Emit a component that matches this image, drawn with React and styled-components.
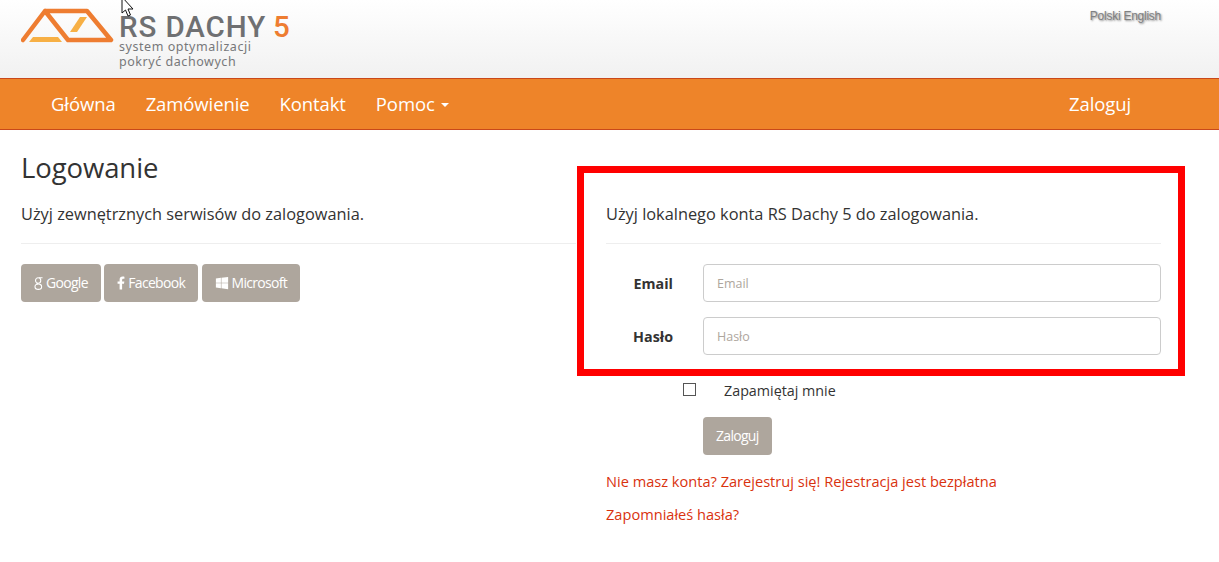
import React from "react";
import styled, { createGlobalStyle } from "styled-components";
import { FaFacebookF, FaWindows } from "react-icons/fa";

const Global = createGlobalStyle`
  html, body { margin: 0; padding: 0; background: #fff; }
  body { font-family: "Open Sans", "Noto Sans", sans-serif; color: #333; }
  * { box-sizing: border-box; }
`;
const Page = styled.div`position: relative; width: 1219px; height: 562px; overflow: hidden;`;
const Header = styled.header`
  height: 78px; display: flex; justify-content: space-between; padding: 0 58px 0 21px;
  background: linear-gradient(#ffffff, #f1f1f1);
`;
const Brand = styled.div`display: flex; align-items: flex-start; gap: 5px; padding-top: 8px;`;
const BrandText = styled.div`display: flex; flex-direction: column; padding-top: 7px;`;
const BrandName = styled.div`
  font-family: "Roboto", sans-serif; font-weight: 500; font-size: 29.5px; line-height: 24px; letter-spacing: .9px; color: #6f7072;
  span { color: #ee7d31; margin-left: 7px; font-weight: 500; }
`;
const BrandSub = styled.div`
  font-family: "Noto Sans", sans-serif; font-size: 12.5px; line-height: 14.5px; letter-spacing: .55px; color: #77787a; margin-top: 1px;
`;
const Lang = styled.div`
  font-family: "Liberation Sans", sans-serif; font-size: 12px; letter-spacing: -.25px; color: #808080; padding-top: 9px; text-shadow: 1px 1px 2px #808080;
`;
const Nav = styled.nav`
  height: 52px; display: flex; justify-content: space-between; align-items: center; padding: 0 73px 0 36px;
  background: #ee8429; border-top: 1px solid #c9481a; border-bottom: 1px solid #c9481a;
`;
const NavList = styled.div`display: flex;`;
const NavItem = styled.a`
  padding: 0 15px; color: #fff; font-size: 18.5px; line-height: 50px; letter-spacing: -.1px; display: flex; align-items: center;
`;
const Caret = styled.i`
  display: inline-block; margin-left: 6px; margin-top: 2px; border-top: 4px solid #fff; border-left: 4px solid transparent; border-right: 4px solid transparent;
`;
const Row = styled.main`display: grid; grid-template-columns: 585px 585px; padding-left: 6px;`;
const Col = styled.section`padding: 0 15px;`;
const Title = styled.h2`
  margin: 19px 0 0; height: 37px; font-weight: 400; font-size: 27.5px; line-height: 37px; color: #333; letter-spacing: -.1px;
`;
const Lead = styled.h4`
  margin: 17px 0 0; font-weight: 400; font-size: 16.35px; line-height: 22px; color: #333;
`;
const Rule = styled.hr`margin: 18px 0 20px; border: 0; border-top: 1px solid #eee;`;
const Socials = styled.div`display: flex; gap: 3.5px;`;
const Btn = styled.button`
  height: 38px; padding: 0 13px; border: 0; border-radius: 4px; background: #aea69d; color: #fff;
  font: 400 14px/38px "Open Sans", sans-serif; letter-spacing: -.7px; display: inline-flex; align-items: center; gap: 3px;
`;
const FacebookIcon = styled(FaFacebookF)`width: 8px; height: 14px;`;
const FormGrid = styled.div`
  display: grid; grid-template-columns: 67px 458px; column-gap: 30px; row-gap: 15px; align-items: center;
`;
const Label = styled.label`font-weight: 700; font-size: 14.3px; text-align: right; color: #333;`;
const Input = styled.input`
  width: 100%; height: 38px; padding: 0 13px; border: 1px solid #ccc; border-radius: 4px; font: 400 12.5px "Open Sans", sans-serif; background: #fff;
  &::placeholder { color: #aea69d; opacity: 1; }
`;
const Remember = styled.div`
  display: flex; align-items: center; margin: 24px 0 0 77px; height: 22px; font-size: 14.3px; color: #333;
`;
const Box = styled.span`width: 13px; height: 13px; border: 1px solid #555; background: #fff; margin-right: 28px; margin-top: -2px;`;
const SubmitWrap = styled.div`margin: 16px 0 0 97px;`;
const Links = styled.div`margin-top: 16px; display: flex; flex-direction: column; gap: 13px;`;
const Linkish = styled.a`color: #d9320e; font-size: 14.6px; line-height: 20px;`;
const RedFrame = styled.div`
  position: absolute; left: 577px; top: 166px; width: 608px; height: 210px; border: 7px solid #ff0000; pointer-events: none;
`;
const Cursor = styled.svg`position: absolute; left: 121px; top: 0;`;

const GoogleGlyph = () => (
  <svg width="9" height="15" viewBox="0 0 10 15" fill="none" stroke="#fff" strokeWidth="1.2" aria-hidden="true">
    <ellipse cx="4.6" cy="4.2" rx="2.9" ry="3.1" />
    <ellipse cx="4.8" cy="11" rx="3.7" ry="3" />
    <path d="M5.5 1.2 H9.5 M2.8 7 L4.5 8" />
  </svg>
);

export default function App() {
  return (
    <Page>
      <Global />
      <Header>
        <Brand>
          <svg width="93" height="35" viewBox="0 0 93 35" aria-hidden="true">
            <path d="M2 32 L24 3 L66 3 L90 32 L47 32 L24 3" fill="none" stroke="#ee7d31" strokeWidth="4.5" strokeLinejoin="round" strokeLinecap="round" />
            <path d="M8 34 L12 29 L37 29 L41 34 Z" fill="#f7b045" />
            <path d="M49 24 L59 9 L66 9 L56 24 Z" fill="#f7b045" />
          </svg>
          <BrandText>
            <BrandName>RS DACHY<span>5</span></BrandName>
            <BrandSub>system optymalizacji<br />pokryć dachowych</BrandSub>
          </BrandText>
        </Brand>
        <Lang>Polski English</Lang>
      </Header>
      <Nav>
        <NavList>
          <NavItem>Główna</NavItem>
          <NavItem>Zamówienie</NavItem>
          <NavItem>Kontakt</NavItem>
          <NavItem>Pomoc<Caret /></NavItem>
        </NavList>
        <NavItem>Zaloguj</NavItem>
      </Nav>
      <Row>
        <Col>
          <Title>Logowanie</Title>
          <Lead>Użyj zewnętrznych serwisów do zalogowania.</Lead>
          <Rule />
          <Socials>
            <Btn><GoogleGlyph />Google</Btn>
            <Btn><FacebookIcon />Facebook</Btn>
            <Btn><FaWindows size={14} />Microsoft</Btn>
          </Socials>
        </Col>
        <Col>
          <Title />
          <Lead>Użyj lokalnego konta RS Dachy 5 do zalogowania.</Lead>
          <Rule />
          <FormGrid>
            <Label>Email</Label>
            <Input placeholder="Email" />
            <Label>Hasło</Label>
            <Input placeholder="Hasło" />
          </FormGrid>
          <Remember><Box />Zapamiętaj mnie</Remember>
          <SubmitWrap><Btn>Zaloguj</Btn></SubmitWrap>
          <Links>
            <Linkish>Nie masz konta? Zarejestruj się! Rejestracja jest bezpłatna</Linkish>
            <Linkish>Zapomniałeś hasła?</Linkish>
          </Links>
        </Col>
      </Row>
      <RedFrame />
      <Cursor width="14" height="18" viewBox="0 0 14 18" aria-hidden="true">
        <path d="M1 -3 L1 13 L4.5 10 L7 16 L9.5 15 L7 9 L12 9 Z" fill="#fff" stroke="#111" strokeWidth="1" />
      </Cursor>
    </Page>
  );
}
